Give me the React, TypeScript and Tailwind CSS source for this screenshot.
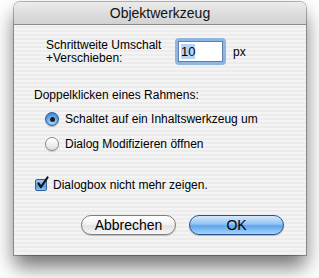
import React from 'react';

const font = { fontFamily: '"Liberation Sans", Arial, sans-serif' };

const Radio: React.FC<{ checked?: boolean; label: string }> = ({ checked, label }) => (
  <div className="flex items-center gap-[6px] h-[16px]">
    {checked ? (
      <span className="w-[14px] h-[14px] rounded-full border border-[#2f5f9e] bg-[radial-gradient(circle_at_50%_70%,#bfe2ff_0%,#5a9fe6_55%,#2f6fc0_100%)] flex items-center justify-center shadow-[0_1px_1px_rgba(0,0,0,0.25)]">
        <span className="w-[5px] h-[5px] rounded-full bg-[#15202e]" />
      </span>
    ) : (
      <span className="w-[14px] h-[14px] rounded-full border border-[#8a8a8a] bg-[linear-gradient(180deg,#ffffff_0%,#f2f2f2_50%,#dcdcdc_100%)] shadow-[0_1px_1px_rgba(0,0,0,0.15)]" />
    )}
    <span className="text-[12px] text-black leading-none">{label}</span>
  </div>
);

export default function App() {
  return (
    <div className="w-[319px] h-[278px] bg-white pt-[2px] pl-[14px]" style={font}>
      <div className="w-[292px] h-[253px] flex flex-col rounded-t-[6px] shadow-[0_0_0_1px_rgba(0,0,0,0.28),0_12px_20px_rgba(0,0,0,0.55)] bg-[repeating-linear-gradient(180deg,#ececec_0px,#ececec_2px,#f4f4f4_2px,#f4f4f4_4px)]">
        {/* title bar */}
        <div className="h-[23px] shrink-0 rounded-t-[6px] border-b border-[#8c8c8c] bg-[linear-gradient(180deg,#ececec_0%,#dedede_50%,#d2d2d2_100%)] flex items-center justify-center">
          <span className="text-[14px] text-[#111] leading-none">Objektwerkzeug</span>
        </div>

        <div className="flex flex-col pt-[13px]">
          {/* step row */}
          <div className="flex items-center h-[27px] pl-[32px]">
            <div className="w-[129px] text-[12px] leading-[13px] text-black">
              <div>Schrittweite Umschalt</div>
              <div>+Verschieben:</div>
            </div>
            <div className="w-[51px] h-[27px] rounded-[4px] bg-[#8fb6e3] p-[3px]">
              <div className="w-full h-full bg-white border border-[#5d7fa8] flex items-center pl-[2px]">
                <span className="text-[13px] leading-[15px] bg-[#b7d4f7] text-black">10</span>
              </div>
            </div>
            <span className="ml-[7px] text-[12px] text-black">px</span>
          </div>

          {/* double click section */}
          <div className="mt-[22px] pl-[20px] h-[16px] flex items-center text-[12px] text-black">
            Doppelklicken eines Rahmens:
          </div>
          <div className="mt-[8px] pl-[31px] flex flex-col gap-[9px]">
            <Radio checked label="Schaltet auf ein Inhaltswerkzeug um" />
            <Radio label="Dialog Modifizieren öffnen" />
          </div>

          {/* checkbox */}
          <div className="mt-[25px] pl-[21px] h-[16px] flex items-center gap-[6px]">
            <span className="relative w-[12px] h-[12px] rounded-[2px] border border-[#2f5f9e] bg-[linear-gradient(180deg,#9fcdf8_0%,#5a9fe6_60%,#8cc4f5_100%)]">
              <svg className="absolute left-[0px] top-[-4px]" width="14" height="14" viewBox="0 0 14 14">
                <path d="M2.5 7.5 L5 11 L11.5 1.5" fill="none" stroke="#111" strokeWidth="2.2" strokeLinecap="round" strokeLinejoin="round" />
              </svg>
            </span>
            <span className="text-[12px] text-black leading-none">Dialogbox nicht mehr zeigen.</span>
          </div>

          {/* buttons */}
          <div className="mt-[22px] flex justify-end gap-[13px] pr-[22px]">
            <button className="w-[95px] h-[20px] rounded-full border border-[#7e7e7e] bg-[linear-gradient(180deg,#ffffff_0%,#f3f3f3_45%,#e2e2e2_55%,#f7f7f7_100%)] text-[14px] leading-none text-black shadow-[0_1px_1px_rgba(0,0,0,0.2)]">
              Abbrechen
            </button>
            <button className="w-[95px] h-[20px] rounded-full border border-[#2c5190] bg-[linear-gradient(180deg,#d4e9fc_0%,#93c4f2_45%,#5ea4ec_55%,#a7d6fd_100%)] text-[14px] leading-none text-black shadow-[0_1px_1px_rgba(0,0,0,0.25)]">
              OK
            </button>
          </div>
        </div>
      </div>
    </div>
  );
}
